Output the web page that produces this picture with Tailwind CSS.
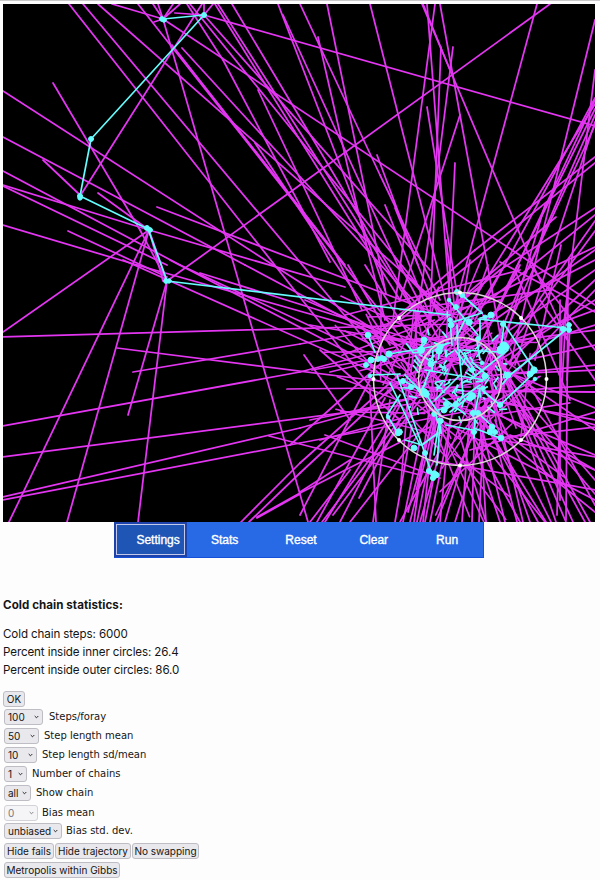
<!DOCTYPE html>
<html lang="en">
<head>
<meta charset="utf-8">
<title>Cold chain statistics</title>
<script src="https://cdn.jsdelivr.net/npm/@tailwindcss/browser@4"></script>
</head>
<body class="w-[600px] h-[880px] overflow-hidden bg-[#fdfdfd] text-[#151515] border-t border-[#c9c7ca] flex flex-col font-['Inter',sans-serif]">
<svg class="block mt-[3px] ml-[3px] w-[592px] h-[518px] bg-black shrink-0" viewBox="3 4 592 518">
  <g id="rays" stroke="#e436f2" stroke-width="1.75" stroke-linecap="round"></g>
  <g id="path" stroke="#66fbfc" fill="#66fbfc" stroke-linecap="round"></g>
  <g fill="none" stroke="#dfd6da" stroke-width="1.5"><circle cx="460" cy="379" r="86.5"/><circle cx="460" cy="379" r="41.5"/></g>
  <g fill="#fff"><circle cx="460" cy="292.5" r="2"/><circle cx="521" cy="318" r="2"/><circle cx="546.5" cy="379" r="2"/><circle cx="521" cy="440" r="2"/><circle cx="460" cy="465.5" r="2"/><circle cx="399" cy="440" r="2"/><circle cx="373.5" cy="379" r="2"/><circle cx="399" cy="318" r="2"/></g>
</svg>
<nav class="ml-[114px] w-[370px] h-9 shrink-0 grid grid-cols-5 bg-[#286ae6] border-b border-[#1450d8] border-r border-r-[#1450d8] font-['Liberation_Sans',sans-serif] text-[12px] text-white [-webkit-text-stroke:0.35px_white]">
  <div class="bg-[#1f55b5] border-2 border-[#1d43ab] outline outline-1 outline-[#c3c9ea] -outline-offset-3 mr-px flex items-center justify-end pr-[5px]">Settings</div>
  <div class="flex items-center justify-center">Stats</div>
  <div class="flex items-center justify-center pl-[5px]">Reset</div>
  <div class="flex items-center justify-center pl-[3px]">Clear</div>
  <div class="flex items-center justify-center pl-0.5">Run</div>
</nav>
<section class="ml-[3px] mt-[38px] h-[94px] shrink-0 text-[11.6px] tracking-[-0.11px] leading-[18px] whitespace-nowrap">
  <h1 class="font-bold leading-[18px] tracking-[0.05px]">Cold chain statistics:</h1>
  <div class="mt-[11px]">Cold chain steps: 6000</div>
  <div>Percent inside inner circles: 26.4</div>
  <div>Percent inside outer circles: 86.0</div>
</section>
<section id="form" class="ml-[3px] shrink-0 text-[10px] leading-none whitespace-nowrap">
  <div class="h-[17px] flex items-center"><button class="w-[22px] h-4 rounded-[3px] border border-[#bebdc3] bg-[#e9e8ed]">OK</button></div>
</section>
<script>
const NS = 'http://www.w3.org/2000/svg';
const rays = document.getElementById('rays'), trail = document.getElementById('path');
function seg(parent, a, b, c, d, w) {
  const l = document.createElementNS(NS, 'line');
  l.setAttribute('x1', a); l.setAttribute('y1', b); l.setAttribute('x2', c); l.setAttribute('y2', d);
  if (w) l.setAttribute('stroke-width', w);
  parent.appendChild(l);
}
function dot(x, y, r) {
  const c = document.createElementNS(NS, 'circle');
  c.setAttribute('cx', x); c.setAttribute('cy', y); c.setAttribute('r', r);
  trail.appendChild(c);
}
// Failed forays: x1 y1 x2 y2
const fails = `69 4 370 386;83 4 415 399;98 4 440 305;112 4 163 19;138 4 395 330;153 4 163 19;158 4 163 19;173 4 163 19;180 4 163 19
163 19 308 522;163 19 595 305;182 48 445 335;187 4 223 60;223 60 330 262;190 4 442 315;204 15 595 126;82 193 202 4;204 4 204 15;213 4 204 15
175 13 204 15;154 22 163 19;215 4 400 300;218 4 420 320;232 4 430 335;278 4 355 204;283 15 400 270;355 204 385 290;258 90 362 310;255 143 390 345
172 45 345 265;204 15 430 270;300 4 380 175;380 175 440 300;318 37 352 186;352 186 385 320
3 91 273 265;273 265 440 372;3 137 245 265;245 265 395 345;43 160 80 195;53 83 140 230;140 230 167 281;3 171 180 265;180 265 400 368
3 185 149 230;3 186 167 265;3 225 137 265;137 265 430 348;68 231 167 277;157 207 430 311;98 193 149 230;3 332 149 230;9 522 149 230;67 522 149 230
167 281 300 185;300 185 550 4;167 281 128 415;167 281 138 522;149 230 167 281;149 230 163 281;149 230 345 287;3 337 490 323;117 348 450 390
133 372 300 344;300 344 400 326;3 426 300 372;300 372 395 347;3 457 480 395;3 497 300 428;300 428 420 395;3 500 300 443;300 443 500 405;269 436 420 475;287 389 470 387;123 260 480 419;170 260 390 374;200 273 430 345
327 4 386 294;370 4 448 310;422 4 533 265;533 265 570 345;427 4 447 265;447 265 455 355;435 4 393 320;441 47 430 320;440 4 460 115;460 115 502 345
453 47 430 230;430 230 415 330;427 107 462 325;460 115 400 300;455 163 446 350;423 4 450 70;537 4 450 325;595 20 510 365;595 70 563 330
595 98 475 320;595 100 485 335;595 104 430 370;595 109 505 290;595 115 475 390;595 122 515 365;595 157 475 250;475 250 370 340;595 163 400 320;595 125 530 265
595 208 500 270;500 270 420 335;595 215 440 340;595 221 500 355;595 231 470 400;595 247 440 320;595 250 480 330;556 217 460 300;561 245 535 360;545 205 505 340
377 155 418 265;395 208 440 320;385 205 431 318;470 260 455 345;446 240 455 310;345 315 520 270;304 355 350 420
241 522 300 463;300 463 400 374;249 522 300 473;300 473 400 380;257 517 300 493;300 493 430 427;257 518 300 494;300 492 350 460;325 435 440 478;359 498 400 420;310 522 350 470;333 515 420 400
317 522 385 398;322 522 430 380;340 522 400 405;350 522 430 420;373 522 390 400;376 522 370 390;403 522 420 440;408 512 430 430;410 522 440 400;414 522 440 330
417 522 437 420;420 522 435 470;423 522 438 385;425 522 443 430;430 522 455 400;436 522 475 430;445 522 480 400;455 522 490 410;462 522 470 410
472 522 476 370;479 522 485 400;486 522 480 420;486 522 458 430;500 522 470 430;505 522 480 420;517 522 485 400;523 522 490 380;538 522 475 405
546 522 470 400;551 522 480 380;556 522 500 360;566 522 505 380;573 522 495 350;585 522 510 385;590 522 500 360;595 512 480 420;595 505 500 330;595 500 440 420
595 494 515 400;595 490 430 460;595 480 505 375;595 470 510 435;595 457 500 440;595 455 450 395;595 430 500 365;595 427 480 440;595 420 480 399;595 412 470 450
595 408 515 375;595 392 425 391;595 385 470 394;595 370 505 374;595 365 420 383;595 345 480 370;595 330 450 349;595 310 500 345;595 300 420 410;595 290 470 420
569 260 560 420;562 330 557 515;570 325 567 380;516 273 570 400;530 265 595 350;500 262 595 312;550 290 400 310;595 260 440 340;595 270 460 365;595 280 500 370
535 265 500 345;520 265 460 385;505 265 455 345;488 265 438 400;400 265 460 380;365 265 425 360;348 265 410 370
396 350 290 445;370 380 300 515;400 400 325 522;412 425 395 522;480 440 545 522;500 415 595 470;495 420 530 522;470 430 520 522;450 420 440 522;440 450 400 522
368 317 470 314;382 325 500 300;345 331 440 380;320 350 400 420;330 372 420 350;560 300 560 500;568 290 566 520;540 300 595 380
310 325 450 350;305 300 420 350;312 370 480 340;310 420 430 395;320 440 470 400;545 340 595 325;540 410 595 425`;
for (const row of fails.split(/[;\n]/)) seg(rays, ...row.trim().split(' ').map(Number));

// Deterministic scatter of rejected steps around the target
let seed = 91;
const rnd = () => (seed = (seed * 16807) % 2147483647) / 2147483647;
for (let i = 0; i < 62; i++) {
  const a = rnd() * 6.283, r = 22 + rnd() * 60, b = a + 0.7 + rnd() * 1.8, s = 25 + rnd() * 70;
  seg(rays, 460 + r * Math.cos(a), 376 + r * Math.sin(a), 460 + s * Math.cos(b), 376 + s * Math.sin(b), 1.5);
}
for (let i = 0; i < 24; i++) {
  const a = rnd() * 6.283, r = 30 + rnd() * 50, b = a + (rnd() < 0.5 ? -1 : 1) * (0.35 + rnd() * 0.7), s = 100 + rnd() * 50;
  seg(rays, 460 + r * Math.cos(a), 379 + r * Math.sin(a), 460 + s * Math.cos(b), 379 + s * Math.sin(b), 1.6);
}

// Accepted steps
const steps = `163 19 204 15;204 15 91 139;91 139 80 196;80 196 148 229;148 229 167 281;167 281 450 315;478 319 566 328;568 328 510 375;504 324 536 372;504 324 501 348
535 372 500 405;500 405 482 390;368 335 375 352;371 360 385 358;389 354 420 349;420 349 450 343;449 300 478 335;462 295 482 313;482 313 450 323
480 318 492 316;457 325 458 350;480 320 480 338;390 383 420 445;397 375 422 445;402 380 425 392;420 350 424 338;425 393 440 415;440 422 437 465;439 422 434 455
422 445 438 433;405 440 422 445;422 445 432 475;446 425 473 430;478 413 494 428;474 428 500 438;399 435 387 415;387 415 400 395;370 375 400 374;459 350 463 395
463 350 500 352;460 375 435 400;470 380 508 350;425 370 485 380;445 410 480 385;450 412 465 400;475 375 455 350
480 388 475 412;430 370 420 395;432 371 433 350;460 350 475 370;472 362 488 376;420 390 405 375;438 410 455 405;443 398 465 414;475 420 474 438
435 350 448 343;450 320 452 345;465 320 455 340;477 340 480 360`;
for (const row of steps.split(/[;\n]/)) seg(trail, ...row.trim().split(' ').map(Number), 1.7);
const dots = `162 19 2.4;164 20 2.3;204 15 2.5;91 139 2.5;80 196 2.5;80 198 2.2;147 228 2.5;150 230 2.4;166 281 2.4;169 281 2.2
368 335 2.8;371 360 3;366 365 2.5;370 376 1.8;378 359 2.5;382 358 2.5;384 359 2.6;389 354 3;403 381 2.6;411 387 2.6;421 350 3.5;424 340 3;439 351 3.2;440 347 3;431 364 3
451 325 2.8;450 320 2.2;457 292 2.5;462 295 2.5;456 307 2.5;449 300 1.8;469 322 3.2;485 317 2;491 315 3;503 324 2.5;504 346 4;501 350 4;506 347 3;508 375 3
534 370 3.2;530 374 3;535 379 1.8;563 329 2.6;569 325 2.4;569 330 2.4;500 405 2.6;485 376 3;478 339 2.4;472 370 2.4;424 392 3.5;426 394 3.3
423 392 3;440 421 3;434 414 2.4;446 404 2.5;444 410 3;456 404 2.5;472 396 3.5;470 398 3;483 388 2;473 413 2.6;478 413 2.6;388 417 1.8;399 432 3.3
398 433 2.8;414 448 3;425 453 2.5;429 471 2.6;434 474 3.2;433 478 2.6;436 475 3;492 427 2.8;490 432 2.8;495 432 2.5;501 438 2.8;474 432 2.5;482 363 1.9`;
for (const row of dots.split(/[;\n]/)) dot(...row.trim().split(' ').map(Number));
for (let i = 0; i < 85; i++) {
  const a = rnd() * 6.283, r = 10 + rnd() * 48, x = 455 + r * Math.cos(a), y = 374 + r * Math.sin(a);
  seg(trail, x, y, x + rnd() * 14 - 7, y + rnd() * 16 - 8, 1.7);
}

// Option rows: value, width, label, row height, disabled, gap
const form = document.getElementById('form');
for (const [v, w, t, h, off, gap] of [['100', 39, 'Steps/foray', 19, 0, 6], ['50', 35, 'Step length mean', 19, 0, 5], ['10', 33, 'Step length sd/mean', 19, 0, 5], ['1', 23, 'Number of chains', 19, 0, 5], ['all', 27, 'Show chain', 19, 0, 5], ['0', 34, 'Bias mean', 21, 1, 4], ['unbiased', 58, 'Bias std. dev.', 16, 0, 4]]) {
  form.insertAdjacentHTML('beforeend', `<div class="flex items-center" style="height:${h}px"><div class="${off ? 'ml-px h-4 rounded-[3px] border border-[#d3d2d7] bg-[#f5f5f7] text-[#77777b] flex items-center justify-between pl-[3px] pr-[3px]' : 'ml-px h-4 rounded-[3px] border border-[#bebdc3] bg-[#e9e8ed] flex items-center justify-between pl-[3px] pr-[3px]'}" style="width:${w}px"><span>${v}</span><svg class="w-[5px] h-[4px]" viewBox="0 0 5 4" fill="none" stroke="currentColor" stroke-width="0.9"><path d="M.7 1 2.5 2.8 4.3 1"/></svg></div><span class="font-['DejaVu_Sans',sans-serif] text-[10px]" style="margin-left:${gap}px">${t}</span></div>`);
}
form.insertAdjacentHTML('beforeend', `<div class="h-[23px] pl-px flex items-center gap-px"><button class="w-[50px] h-4 rounded-[3px] border border-[#bebdc3] bg-[#e9e8ed]">Hide fails</button><button class="w-[76px] h-4 rounded-[3px] border border-[#bebdc3] bg-[#e9e8ed]">Hide trajectory</button><button class="w-[67px] h-4 rounded-[3px] border border-[#bebdc3] bg-[#e9e8ed]">No swapping</button></div><div class="h-4 pl-px flex items-center"><button class="w-[116px] h-4 rounded-[3px] border border-[#bebdc3] bg-[#e9e8ed]">Metropolis within Gibbs</button></div>`);
</script>
</body>
</html>
